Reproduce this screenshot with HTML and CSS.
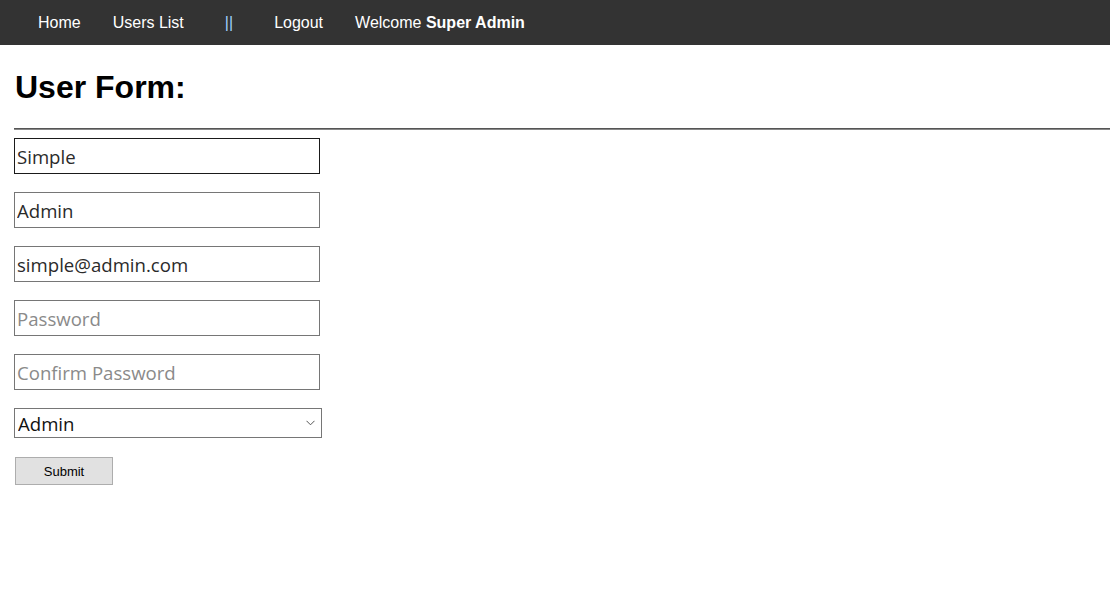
FILE: index.html
```html
<!DOCTYPE html>
<html>
<head>
<meta charset="utf-8">
<link rel="stylesheet" href="styles.css">
</head>
<body>
<nav class="topnav">
  <a class="nav-link" href="#">Home</a>
  <a class="nav-link" href="#">Users List</a>
  <span class="nav-sep">||</span>
  <a class="nav-link" href="#">Logout</a>
  <span class="nav-welcome">Welcome <b>Super Admin</b></span>
</nav>
<main class="content">
  <h1 class="title">User Form:</h1>
  <hr class="rule">
  <form class="user-form">
    <input class="field field-focus" type="text" value="Simple">
    <input class="field" type="text" value="Admin">
    <input class="field" type="email" value="simple@admin.com">
    <input class="field" type="password" placeholder="Password">
    <input class="field" type="password" placeholder="Confirm Password">
    <span class="select-wrap">
      <select class="select">
        <option>Admin</option>
      </select>
      <svg class="chevron" width="9" height="6" viewBox="0 0 9 6"><path d="M0.5 0.8 L4.5 4.8 L8.5 0.8" fill="none" stroke="#555" stroke-width="1"/></svg>
    </span>
    <button class="submit" type="button">Submit</button>
  </form>
</main>
</body>
</html>
```

FILE: styles.css
```css
html, body {
  margin: 0;
  padding: 0;
  background: #fff;
}
body {
  font-family: "Liberation Sans", Arial, sans-serif;
}
.topnav {
  display: flex;
  align-items: center;
  height: 45px;
  background: #333333;
  padding-left: 38px;
  font-size: 16px;
}
.nav-link {
  color: #fff;
  text-decoration: none;
  margin-right: 32px;
}
.nav-sep {
  color: #9fcfff;
  margin-left: 9px;
  margin-right: 41px;
}
.nav-welcome {
  color: #fff;
}
.content {
  padding-left: 14px;
}
.title {
  font-size: 32px;
  font-weight: bold;
  margin: 24px 0 0 1px;
  line-height: 37px;
}
.rule {
  margin: 22px 0 0 0;
  border: none;
  border-top: 1px solid #555;
  border-bottom: 1px solid #888;
  height: 0;
}
.user-form {
  display: flex;
  flex-direction: column;
  align-items: flex-start;
  margin-top: 8px;
}
.field {
  box-sizing: border-box;
  width: 306px;
  height: 36px;
  margin: 0 0 18px 0;
  padding: 0 2px;
  border: 1px solid #767676;
  font-family: "Open Sans", "Noto Sans", sans-serif;
  font-size: 18.6px;
  color: #2a2a2a;
  outline: none;
}
.field::placeholder {
  color: #8a8a8a;
}
.field-focus {
  border-color: #1a1a1a;
}
.select-wrap {
  position: relative;
  display: block;
  margin: 0 0 19px 0;
}
.select {
  box-sizing: border-box;
  display: block;
  width: 308px;
  height: 30px;
  border: 1px solid #767676;
  background: #fff;
  font-family: "Open Sans", "Noto Sans", sans-serif;
  font-size: 18.6px;
  color: #111;
  padding: 0 3px;
  border-radius: 0;
  appearance: none;
  -webkit-appearance: none;
  outline: none;
}
.chevron {
  position: absolute;
  left: 292px;
  top: 12px;
}
.submit {
  box-sizing: border-box;
  width: 98px;
  height: 28px;
  margin-left: 1px;
  background: #e1e1e1;
  border: 1px solid #adadad;
  font-family: "Liberation Sans", Arial, sans-serif;
  font-size: 13px;
  color: #000;
  padding: 0;
}
```
